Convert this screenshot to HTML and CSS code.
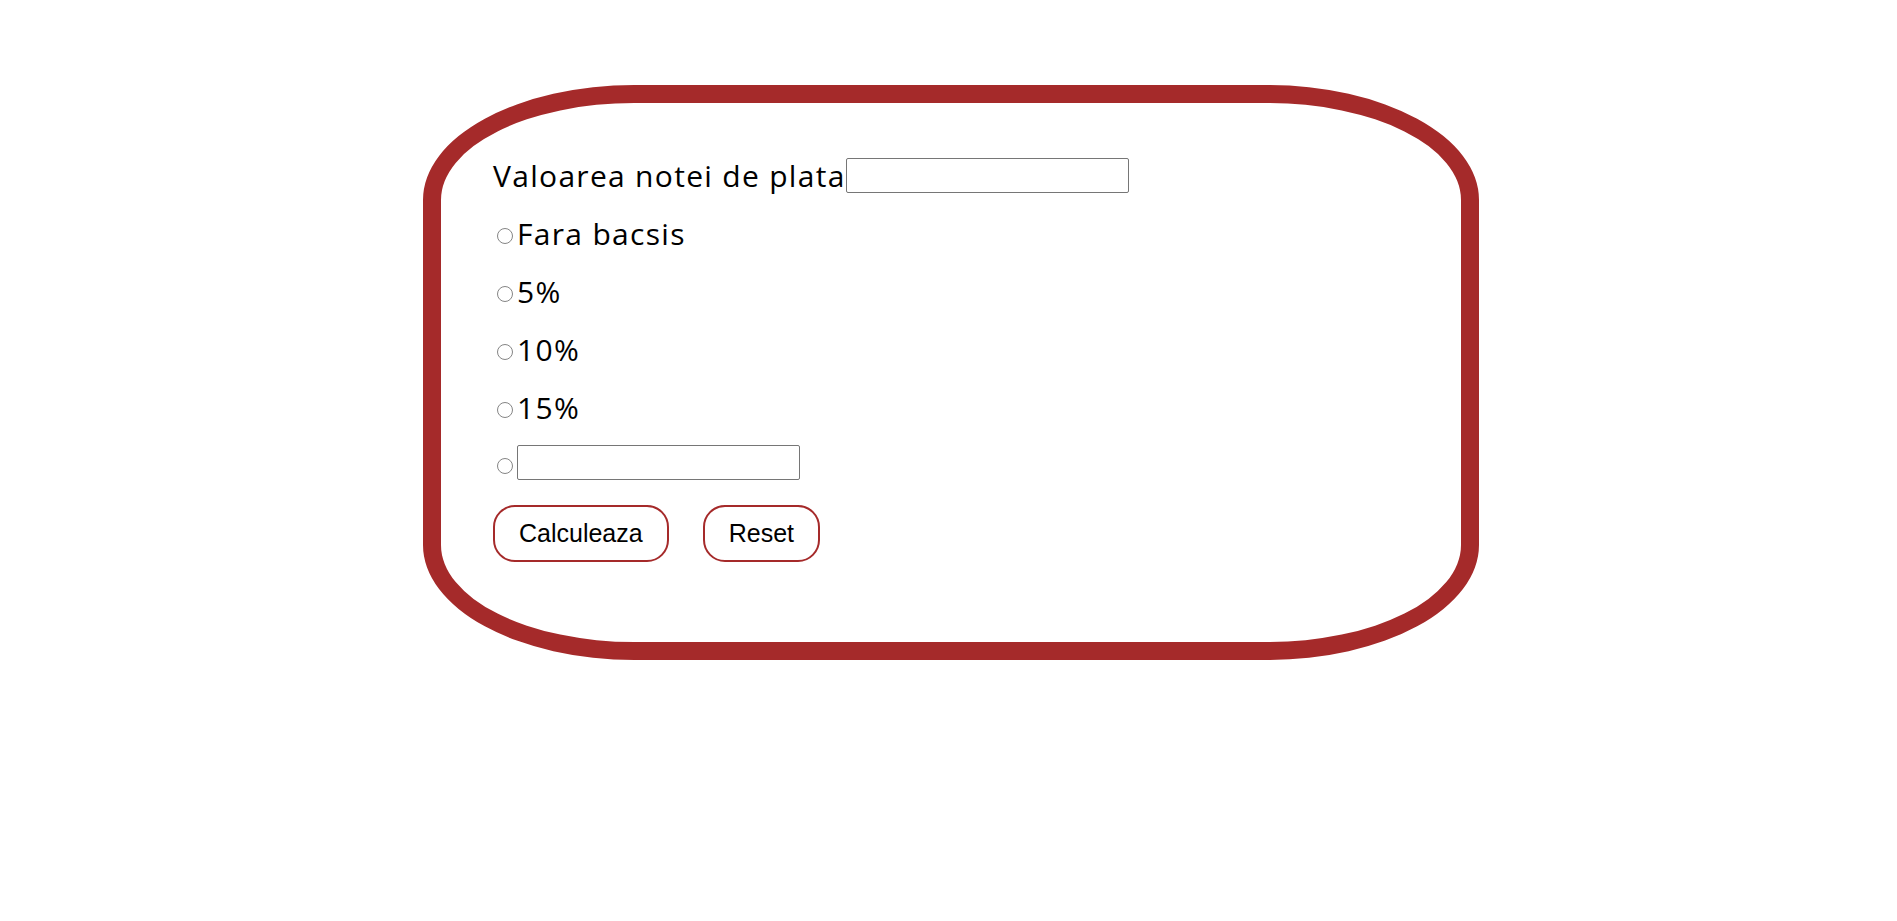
FILE: index.html
```html
<!DOCTYPE html>
<html lang="ro">
<head>
<meta charset="utf-8">
<title>Calculator bacsis</title>
<link rel="stylesheet" href="styles.css">
</head>
<body>
<form class="card">
  <div class="row">
    <label class="label" for="nota">Valoarea notei de plata</label><input class="field" type="text" id="nota">
  </div>
  <div class="row">
    <input class="radio" type="radio" name="tip" id="r0"><label class="label" for="r0">Fara bacsis</label>
  </div>
  <div class="row">
    <input class="radio" type="radio" name="tip" id="r5"><label class="label" for="r5">5%</label>
  </div>
  <div class="row">
    <input class="radio" type="radio" name="tip" id="r10"><label class="label" for="r10">10%</label>
  </div>
  <div class="row">
    <input class="radio" type="radio" name="tip" id="r15"><label class="label" for="r15">15%</label>
  </div>
  <div class="row row-custom">
    <input class="radio" type="radio" name="tip" id="rc"><input class="field" type="text" aria-label="Alt procent">
  </div>
  <div class="actions">
    <button class="btn" type="button">Calculeaza</button>
    <button class="btn" type="reset">Reset</button>
  </div>
</form>
</body>
</html>
```
FILE: styles.css
```css
html, body {
  margin: 0;
  padding: 0;
  background: #ffffff;
}

body {
  font-family: "Open Sans", "Liberation Sans", sans-serif;
  color: #000000;
}

.card {
  box-sizing: border-box;
  width: 1056px;
  height: 575px;
  margin: 85px 0 0 423px;
  border: 18px solid #a52a2a;
  border-radius: 20%;
  padding: 43px 0 0 52px;
  display: flex;
  flex-direction: column;
}

.row {
  height: 58px;
  display: flex;
  align-items: center;
}

.row-custom {
  height: 53px;
}

.label {
  font-size: 30px;
  letter-spacing: 1.3px;
  line-height: 40px;
  padding-top: 2px;
}

.field {
  box-sizing: border-box;
  width: 283px;
  height: 35px;
  margin: 0;
  border: 1px solid #767676;
  border-radius: 2px;
  padding: 1px 2px;
  font-size: 16px;
  background: #ffffff;
}

.radio {
  appearance: none;
  -webkit-appearance: none;
  box-sizing: border-box;
  width: 16px;
  height: 16px;
  margin: 6px 4px 0 4px;
  border: 1.3px solid #858585;
  border-radius: 50%;
  background: #ffffff;
  flex: none;
}

.radio:checked {
  background: radial-gradient(circle, #0075ff 0 45%, #ffffff 50%);
  border-color: #0075ff;
}

.actions {
  display: flex;
  gap: 34px;
  margin-top: 16px;
}

.btn {
  box-sizing: border-box;
  height: 57px;
  padding: 0 24px;
  border: 2px solid #a52a2a;
  border-radius: 22px;
  background: #ffffff;
  color: #000000;
  font-family: "Liberation Sans", Arial, sans-serif;
  font-size: 25px;
  cursor: pointer;
}
```
